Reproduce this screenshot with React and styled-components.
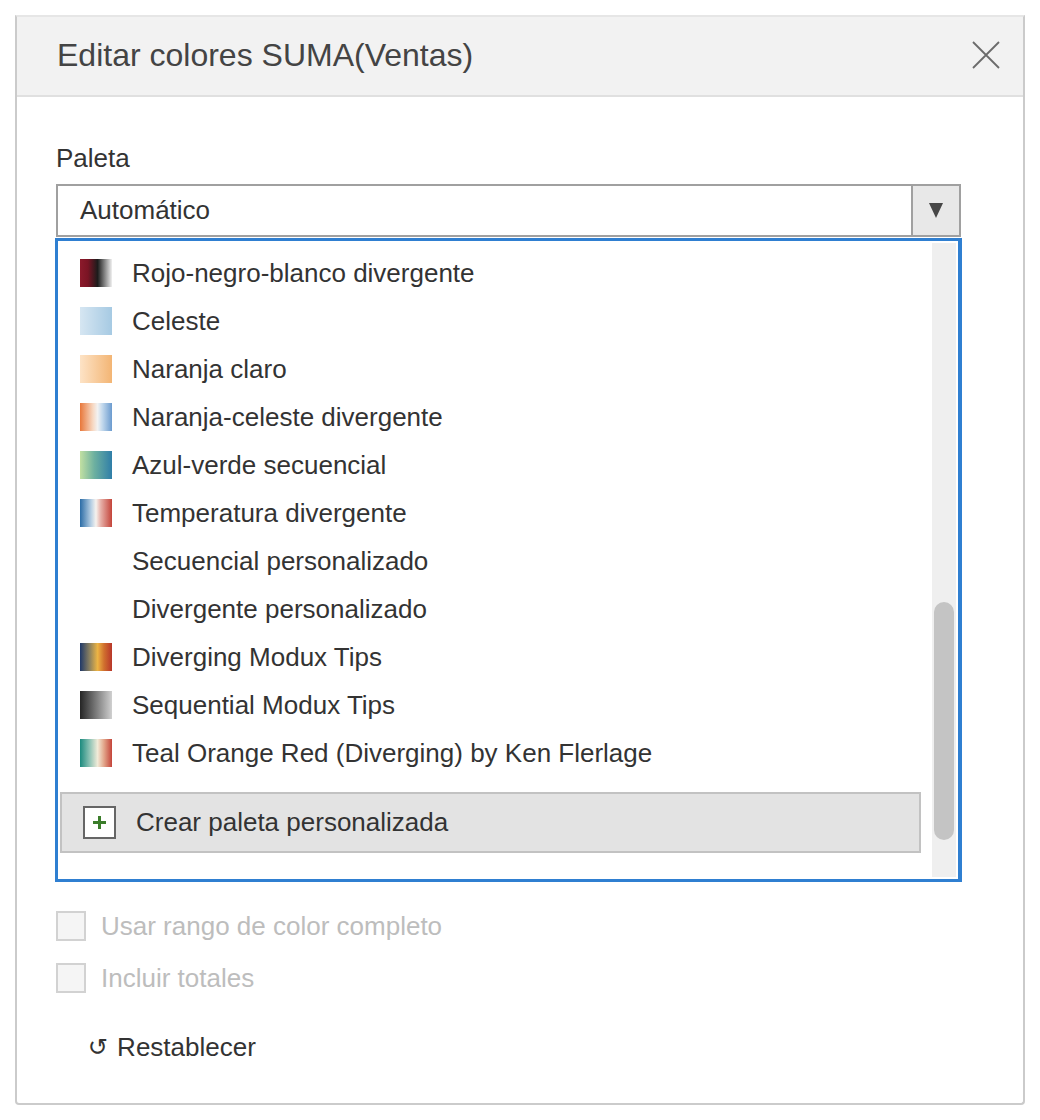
import React from "react";
import styled, { createGlobalStyle } from "styled-components";

const GlobalStyle = createGlobalStyle`
  html, body {
    margin: 0;
    padding: 0;
    background: #ffffff;
    font-family: "Liberation Sans", Arial, sans-serif;
  }
`;

const Page = styled.div`
  padding: 15px 0 0 15px;
`;

const Dialog = styled.div`
  width: 1010px;
  height: 1090px;
  box-sizing: border-box;
  border: 2px solid #cbcbcb;
  border-top-color: #e6e6e6;
  border-radius: 0 0 4px 4px;
  background: #fff;
  display: flex;
  flex-direction: column;
`;

const Header = styled.div`
  height: 80px;
  box-sizing: border-box;
  background: #f2f2f2;
  border-bottom: 2px solid #e0e0e0;
  display: flex;
  align-items: center;
  justify-content: space-between;
  padding: 0 22px 2px 40px;
`;

const Title = styled.h1`
  margin: 0;
  font-size: 32px;
  line-height: 38px;
  font-weight: normal;
  color: #444;
`;

const CloseButton = styled.button`
  border: none;
  background: none;
  padding: 0;
  width: 30px;
  height: 30px;
  display: flex;
  align-items: center;
  justify-content: center;
  cursor: pointer;
`;

const Body = styled.div`
  padding: 46px 0 0 39px;
  display: flex;
  flex-direction: column;
`;

const Label = styled.div`
  font-size: 26px;
  line-height: 30px;
  color: #333;
  margin-bottom: 11px;
`;

const Select = styled.div`
  width: 905px;
  height: 53px;
  box-sizing: border-box;
  border: 2px solid #a0a0a0;
  display: flex;
  align-items: stretch;
`;

const SelectValue = styled.div`
  flex: 1;
  display: flex;
  align-items: center;
  padding-left: 22px;
  font-size: 26px;
  color: #333;
`;

const ArrowBox = styled.div`
  width: 46px;
  border-left: 2px solid #a0a0a0;
  background: #e8e8e8;
  display: flex;
  align-items: center;
  justify-content: center;
`;

const Triangle = styled.div`
  width: 0;
  height: 0;
  border-left: 7px solid transparent;
  border-right: 7px solid transparent;
  border-top: 15px solid #474747;
`;

const ListBox = styled.div`
  margin: 1px 0 0 -1px;
  width: 907px;
  height: 644px;
  box-sizing: border-box;
  border: 3px solid #2f7fd1;
  border-right-width: 4px;
  padding: 2px 2px 2px 0;
  display: flex;
`;

const ListContent = styled.div`
  flex: 1;
  padding-top: 6px;
  display: flex;
  flex-direction: column;
`;

const Item = styled.div`
  height: 48px;
  display: flex;
  align-items: center;
  padding-left: 22px;
  font-size: 26px;
  color: #333;
`;

const Swatch = styled.div`
  width: 32px;
  height: 28px;
  margin-right: 20px;
  flex-shrink: 0;
  background: ${(p) => p.$gradient || "transparent"};
`;

const CreateButton = styled.div`
  margin: 15px 11px 0 2px;
  height: 61px;
  box-sizing: border-box;
  background: #e3e3e3;
  border: 2px solid #c2c2c2;
  display: flex;
  align-items: center;
  padding-left: 21px;
  font-size: 26px;
  color: #333;
`;

const PlusBox = styled.div`
  width: 33px;
  height: 33px;
  box-sizing: border-box;
  border: 2px solid #666;
  background: #fff;
  display: flex;
  align-items: center;
  justify-content: center;
  margin-right: 20px;
`;

const ScrollTrack = styled.div`
  width: 24px;
  background: #efefef;
  display: flex;
  flex-direction: column;
  justify-content: flex-end;
  align-items: center;
  padding-bottom: 37px;
`;

const ScrollThumb = styled.div`
  width: 20px;
  height: 238px;
  border-radius: 10px;
  background: #c4c4c4;
`;

const CheckRow = styled.label`
  display: flex;
  align-items: center;
  height: 30px;
  margin-top: ${(p) => p.$top}px;
  font-size: 26px;
  color: #bdbdbd;
`;

const CheckBox = styled.span`
  width: 30px;
  height: 30px;
  box-sizing: border-box;
  border: 2px solid #d2d2d2;
  background: #f5f5f5;
  margin-right: 15px;
  flex-shrink: 0;
`;

const ResetLink = styled.div`
  margin: 39px 0 0 32px;
  font-size: 26px;
  line-height: 30px;
  color: #333;
  display: flex;
  align-items: center;
  gap: 9px;
`;

const ResetIcon = styled.span`
  font-size: 24px;
  font-family: "DejaVu Sans", sans-serif;
`;

const palettes = [
  { name: "Rojo-negro-blanco divergente", g: "linear-gradient(90deg, #8c1a2b 0%, #7a1424 25%, #1c1c1c 55%, #f0f0f0 100%)" },
  { name: "Celeste", g: "linear-gradient(90deg, #d6e6f2, #a6cae3)" },
  { name: "Naranja claro", g: "linear-gradient(90deg, #fde3c6, #f3b574)" },
  { name: "Naranja-celeste divergente", g: "linear-gradient(90deg, #e8773a 0%, #f7d8c2 40%, #f2f2f2 55%, #c2d8ec 70%, #6b9bcf 100%)" },
  { name: "Azul-verde secuencial", g: "linear-gradient(90deg, #c2e0a2 0%, #6db0a0 45%, #2f7ea8 100%)" },
  { name: "Temperatura divergente", g: "linear-gradient(90deg, #2b6ca6 0%, #b8d0e4 35%, #f6f2ee 50%, #e6b0a8 65%, #c4443a 100%)" },
  { name: "Secuencial personalizado" },
  { name: "Divergente personalizado" },
  { name: "Diverging Modux Tips", g: "linear-gradient(90deg, #1f3868 0%, #8a8060 30%, #ecb444 55%, #d0702e 75%, #b8362a 100%)" },
  { name: "Sequential Modux Tips", g: "linear-gradient(90deg, #252525, #d0d0d0)" },
  { name: "Teal Orange Red (Diverging) by Ken Flerlage", g: "linear-gradient(90deg, #1b8a7e 0%, #8cc2b4 30%, #f1ebd8 55%, #e2a58a 75%, #c4443a 100%)" },
];

export default function App() {
  return (
    <Page>
      <GlobalStyle />
      <Dialog>
        <Header>
          <Title>Editar colores SUMA(Ventas)</Title>
          <CloseButton aria-label="Cerrar">
            <svg width="28" height="28" viewBox="0 0 28 28">
              <path d="M1 1 L27 27 M27 1 L1 27" stroke="#6b6b6b" strokeWidth="1.8" fill="none" />
            </svg>
          </CloseButton>
        </Header>
        <Body>
          <Label>Paleta</Label>
          <Select>
            <SelectValue>Automático</SelectValue>
            <ArrowBox>
              <Triangle />
            </ArrowBox>
          </Select>
          <ListBox>
            <ListContent>
              {palettes.map((p) => (
                <Item key={p.name}>
                  <Swatch $gradient={p.g} />
                  {p.name}
                </Item>
              ))}
              <CreateButton>
                <PlusBox>
                  <svg width="15" height="15" viewBox="0 0 15 15">
                    <path d="M7.5 1 V14 M1 7.5 H14" stroke="#3b7d2a" strokeWidth="3" fill="none" />
                  </svg>
                </PlusBox>
                Crear paleta personalizada
              </CreateButton>
            </ListContent>
            <ScrollTrack>
              <ScrollThumb />
            </ScrollTrack>
          </ListBox>
          <CheckRow $top={29}>
            <CheckBox />
            Usar rango de color completo
          </CheckRow>
          <CheckRow $top={22}>
            <CheckBox />
            Incluir totales
          </CheckRow>
          <ResetLink>
            <ResetIcon>↺</ResetIcon>
            Restablecer
          </ResetLink>
        </Body>
      </Dialog>
    </Page>
  );
}
